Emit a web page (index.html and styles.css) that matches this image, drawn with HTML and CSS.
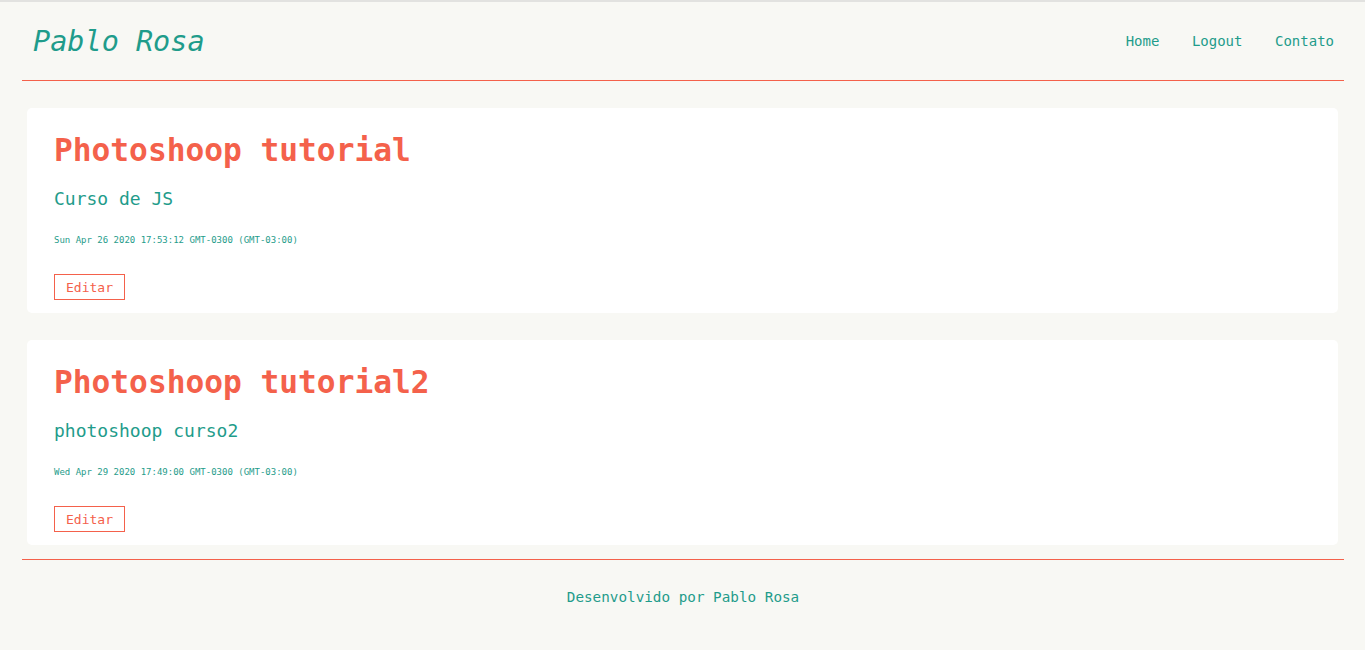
FILE: index.html
```html
<!DOCTYPE html>
<html lang="pt-BR">
<head>
<meta charset="utf-8">
<title>Pablo Rosa</title>
<link rel="stylesheet" href="styles.css">
</head>
<body>
<div class="page">
  <header class="header">
    <a class="logo" href="#">Pablo Rosa</a>
    <nav class="nav">
      <a href="#">Home</a>
      <a href="#">Logout</a>
      <a href="#">Contato</a>
    </nav>
  </header>
  <main class="posts">
    <article class="card">
      <h1 class="card-title">Photoshoop tutorial</h1>
      <h2 class="card-sub">Curso de JS</h2>
      <p class="card-date">Sun Apr 26 2020 17:53:12 GMT-0300 (GMT-03:00)</p>
      <div class="card-actions"><a class="btn" href="#">Editar</a></div>
    </article>
    <article class="card">
      <h1 class="card-title">Photoshoop tutorial2</h1>
      <h2 class="card-sub">photoshoop curso2</h2>
      <p class="card-date">Wed Apr 29 2020 17:49:00 GMT-0300 (GMT-03:00)</p>
      <div class="card-actions"><a class="btn" href="#">Editar</a></div>
    </article>
  </main>
  <footer class="footer">Desenvolvido por Pablo Rosa</footer>
</div>
</body>
</html>
```
FILE: styles.css
```css
html, body {
  margin: 0;
  padding: 0;
}
body {
  background: #f8f8f4;
  border-top: 2px solid #e2e2e0;
  font-family: "DejaVu Sans Mono", "Liberation Mono", monospace;
  color: #1f9c8b;
}
a {
  text-decoration: none;
}
.page {
  margin: 0 21px 0 22px;
}
.header {
  height: 78px;
  display: flex;
  align-items: center;
  justify-content: space-between;
  padding: 0 10px 0 11px;
  border-bottom: 1px solid #f4614b;
}
.logo {
  font-size: 28.5px;
  font-style: italic;
  color: #1f9c8b;
}
.nav {
  display: flex;
  gap: 32.5px;
}
.nav a {
  font-size: 14px;
  color: #1f9c8b;
}
.posts {
  display: flex;
  flex-direction: column;
  gap: 27px;
  padding: 27px 6px 14px 5px;
}
.card {
  background: #ffffff;
  border-radius: 5px;
  padding: 23px 27px 13px;
}
.card-title {
  margin: 0;
  font-size: 31.2px;
  line-height: 38px;
  font-weight: bold;
  color: #f4614b;
}
.card-sub {
  margin: 19px 0 0;
  font-size: 18px;
  line-height: 22px;
  font-weight: normal;
  color: #1f9c8b;
}
.card-date {
  margin: 25px 0 0;
  font-size: 9px;
  line-height: 11px;
  color: #1f9c8b;
}
.card-actions {
  margin-top: 28px;
  display: flex;
}
.btn {
  display: inline-block;
  box-sizing: border-box;
  height: 26px;
  line-height: 25px;
  padding: 0 11px;
  border: 1px solid #f4614b;
  font-size: 13px;
  color: #f4614b;
}
.footer {
  border-top: 1px solid #f4614b;
  text-align: center;
  font-size: 14.3px;
  line-height: 18px;
  padding: 28px 0 44px;
  color: #1f9c8b;
}
```
